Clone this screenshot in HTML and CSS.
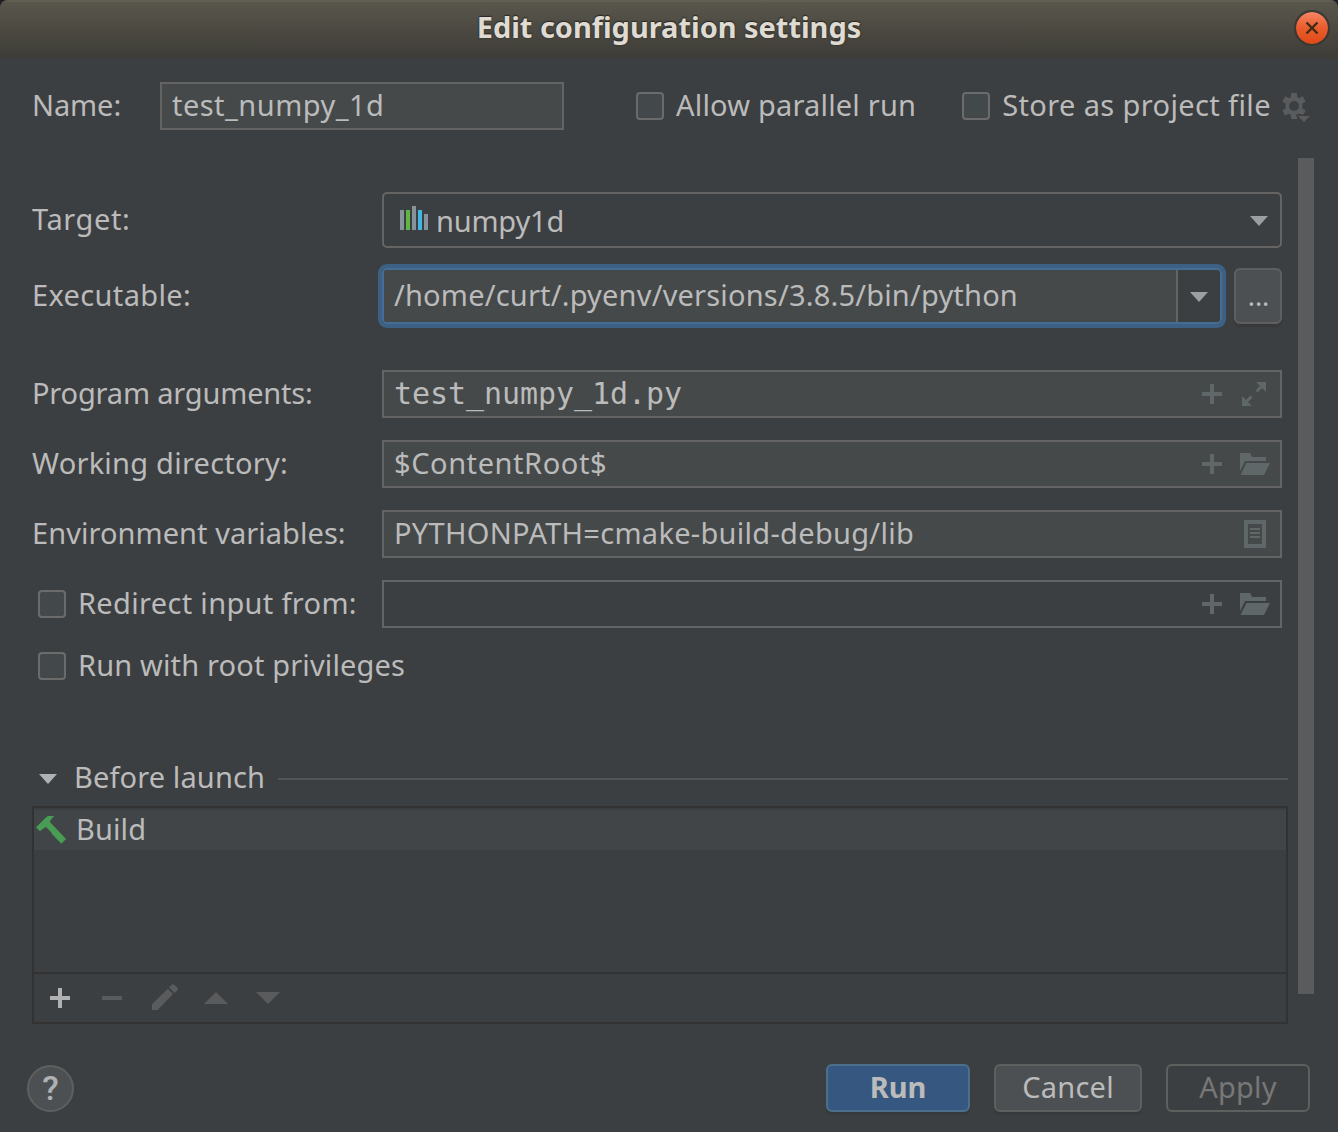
FILE: index.html
```html
<!DOCTYPE html>
<html lang="en">
<head>
<meta charset="utf-8">
<title>Edit configuration settings</title>
<link rel="stylesheet" href="styles.css">
</head>
<body>
<svg class="defs" width="0" height="0">
  <symbol id="plus" viewBox="0 0 20 20"><path d="M8 0h4v8h8v4h-8v8H8v-8H0V8h8z"/></symbol>
  <symbol id="folder" viewBox="0 0 30 22"><path d="M0 0h10l2 4h14v4H5L0 18z"/><path d="M6.500 10H30l-6 12H0.500z"/></symbol>
  <symbol id="arrow" viewBox="0 0 18 10"><path d="M0 0h18L9 10z"/></symbol>
</svg>
<div class="dialog">
  <header class="titlebar">
    <h1 class="title">Edit configuration settings</h1>
    <button class="close" aria-label="Close"><svg width="14" height="14" viewBox="0 0 14 14"><path d="M1.500 1.500l11 11M12.500 1.500l-11 11"/></svg></button>
  </header>

  <div class="head">
    <span class="label ls-m10 head-label">Name:</span>
    <div class="field name-field"><span class="value ls-46">test_numpy_1d</span></div>
    <label class="check parallel"><i class="box"></i><span class="ls-19">Allow parallel run</span></label>
    <label class="check"><i class="box"></i><span class="ls-38">Store as project file</span></label>
    <svg class="gear" width="30" height="32" viewBox="0 0 30 32">
      <path fill-rule="evenodd" d="M10 1h6v4l2.300 1.300 3.400-2 3 5.100-3.300 2.200v4.800l3.300 2.200-3 5.100-3.400-2L16 23v4h-6v-4l-2.300-1.300-3.400 2-3-5.100 3.300-2.200v-4.800L1.300 9.400l3-5.100 3.400 2L10 5zM13 9a5 5 0 1 0 0 10a5 5 0 1 0 0-10z"/>
      <path class="cut" d="M14.500 22.500H30V32H20z"/>
      <path d="M17 24h12l-6 6z"/>
    </svg>
  </div>

  <div class="body">
    <main class="content">
      <section class="form">
        <span class="label ls-60 inset">Target:</span>
        <div class="combo target">
          <svg width="28" height="24" viewBox="0 0 28 24"><path fill="#87939a" d="M0 4h4v20H0zM12 0h4v24h-4zM24 8h4v16h-4z"/><path fill="#62b543" d="M6 4h4v20H6z"/><path fill="#40b6e0" d="M18 4h4v20h-4z"/></svg>
          <span class="ls-m20 target-name">numpy1d</span>
          <svg class="arrow" width="18" height="10"><use href="#arrow"/></svg>
        </div>

        <span class="label ls-35">Executable:</span>
        <div class="exec">
          <div class="combo focused">
            <div class="editor"><span class="ls-19">/home/curt/.pyenv/versions/3.8.5/bin/python</span></div>
            <div class="drop"><svg class="arrow" width="18" height="10"><use href="#arrow"/></svg></div>
          </div>
          <button class="btn browse">...</button>
        </div>

        <span class="label ls-m18 args-row">Program arguments:</span>
        <div class="field args-row">
          <span class="value mono">test_numpy_1d.py</span>
          <svg class="icon" width="20" height="20"><use href="#plus"/></svg>
          <svg class="icon last expand" width="24" height="24" viewBox="0 0 24 24"><path d="M14 0h10v10z"/><path d="M0 14v10h10z"/><path class="line" d="M14.500 9.500l5-5M9.500 14.500l-5 5"/></svg>
        </div>

        <span class="label ls-24 inset">Working directory:</span>
        <div class="field">
          <span class="value ls-56">$ContentRoot$</span>
          <svg class="icon" width="20" height="20"><use href="#plus"/></svg>
          <svg class="icon last" width="30" height="22"><use href="#folder"/></svg>
        </div>

        <span class="label ls-05">Environment variables:</span>
        <div class="field">
          <span class="value ls-29 env">PYTHONPATH=cmake-build-debug/lib</span>
          <svg class="icon last doc" width="22" height="28" viewBox="0 0 22 28"><path fill-rule="evenodd" d="M0 0h22v28H0zM4 4v20h14V4z"/><path d="M6 8h10v2H6zM6 12h10v2H6zM6 16h10v2H6z"/></svg>
        </div>

        <label class="check"><i class="box"></i><span class="ls-33">Redirect input from:</span></label>
        <div class="field disabled">
          <span class="value"></span>
          <svg class="icon" width="20" height="20"><use href="#plus"/></svg>
          <svg class="icon last" width="30" height="22"><use href="#folder"/></svg>
        </div>
      </section>

      <label class="check root"><i class="box"></i><span class="ls-15">Run with root privileges</span></label>

      <section class="launch">
        <div class="launch-head">
          <svg class="arrow" width="18" height="10"><use href="#arrow"/></svg>
          <span class="ls-12">Before launch</span>
          <i class="rule"></i>
        </div>
        <div class="tasks">
          <div class="task">
            <svg width="30" height="28" viewBox="0 0 30 28"><path d="M0 11.300L10.700.7 12 0h6.300L16 2.500l-2.300 3.300L30 23l-4.700 4.700L16 18l-1-2-5-5-1.200.500-4.900 3.700z"/></svg>
            <span class="ls-12">Build</span>
          </div>
          <div class="tools">
            <svg class="add" width="20" height="20"><use href="#plus"/></svg>
            <svg width="20" height="4"><path d="M0 0h20v4H0z"/></svg>
            <svg class="pencil" width="26" height="26" viewBox="0 0 26 26"><path d="M0 20.200L15.700 4.700l5.300 5.300L5.700 26H0zM17 3.400L19.500.900q1.500-1.500 3 0L25.200 3.600q1.500 1.500 0 3L22.500 9z"/></svg>
            <svg width="24" height="12"><path d="M0 12h24L12 0z"/></svg>
            <svg width="24" height="12"><path d="M0 0h24L12 12z"/></svg>
          </div>
        </div>
      </section>
    </main>
    <div class="scrollbar"></div>
  </div>

  <footer class="footer">
    <button class="help">?</button>
    <button class="btn primary">Run</button>
    <button class="btn cancel ls-24">Cancel</button>
    <button class="btn apply ls-24">Apply</button>
  </footer>
</div>
</body>
</html>
```
FILE: styles.css
```css
* { box-sizing: border-box; }
body {
  margin: 0;
  background: #241f26;
  color: #bbb;
  font: 29px/40px "Noto Sans", sans-serif;
  white-space: nowrap;
}
svg { display: block; flex: none; fill: currentColor; }
.defs { position: absolute; }
button { font: inherit; padding: 0; color: inherit; }

.dialog {
  width: 1338px;
  height: 1132px;
  display: flex;
  flex-direction: column;
  background: #3c3f41;
  border-radius: 8px 8px 0 0;
  overflow: hidden;
}

/* title bar */
.titlebar {
  height: 58px;
  flex: none;
  display: grid;
  grid-template-columns: 50px 1fr 50px;
  align-items: center;
  padding-bottom: 4px;
  background: linear-gradient(#59564c, #3e3c37);
  border-top: 2px solid #635f54;
}
.title {
  grid-column: 2;
  margin: 0 0 3px;
  font: bold 29px/40px "Noto Sans", sans-serif;
  letter-spacing: -0.03px;
  text-align: center;
  color: #dfdbd2;
  text-shadow: 0 0 2px #2a2925, 0 -1px 1px #2a2925;
}
.close {
  width: 36px;
  height: 36px;
  margin-left: 6px;
  display: grid;
  place-items: center;
  border: 2px solid #3a3934;
  border-radius: 50%;
  background: linear-gradient(#f58563, #e95c2d 50%, #df4a16) padding-box;
}
.close svg { fill: none; stroke: #3b2d15; stroke-width: 2.4; }

/* name row */
.head { display: flex; align-items: center; height: 48px; margin: 24px 0 28px 32px; flex: none; }
.head-label { width: 128px; }
.name-field { width: 404px; }
.label { align-self: center; margin-top: -2px; }
.check { display: flex; align-items: center; gap: 12px; }
.check span { margin-top: -2px; }
.box { width: 28px; height: 28px; border: 2px solid #6b6b6b; border-radius: 4px; background: #43494a; }
.head .check { margin-left: 72px; }
.head .parallel + .check { margin-left: 46px; }
.gear { margin: 0 0 -4px 10px; color: #5a5b5c; }
.gear .cut { fill: #3c3f41; }

/* form */
.body { display: flex; height: 866px; flex: none; }
.content { width: 1256px; margin-left: 32px; padding-top: 34px; }
.form { display: grid; grid-template-columns: 350px 900px; row-gap: 22px; }
.field {
  display: flex;
  align-items: center;
  height: 48px;
  padding-left: 10px;
  border: 2px solid #646464;
  background: #45494a;
}
.disabled { background: none; }
.value { flex: 1; margin-top: -2px; }
.mono { font: 30px/40px "DejaVu Sans Mono", monospace; letter-spacing: -0.06px; margin: 0; }
.icon { color: #5f6769; margin-right: 18px; }
.icon.last { margin-right: 10px; }
.icon.expand { margin: 0 14px 0 2px; }
.icon.doc { margin-right: 14px; }
.icon .line { fill: none; stroke: currentColor; stroke-width: 3; }
.arrow { color: #9c9fa1; }
.combo { display: flex; align-items: center; height: 56px; border: 2px solid #646464; border-radius: 5px; }
.target { padding: 1px 12px 0 16px; margin-bottom: -2px; }
.target svg:first-child { margin-bottom: 5px; }
.target .arrow { margin-top: 1px; }
.target-name { flex: 1; margin: 1px 0 0 8px; }
.form > .label:first-child { margin-top: -1px; }
.exec { display: flex; gap: 12px; }
.focused { width: 840px; border-color: #466d94; box-shadow: 0 0 0 4px #3d6185; }
.editor {
  flex: 1;
  height: 52px;
  padding: 5px 0 0 10px;
  background: #45494a;
  border-right: 2px solid #646464;
  border-radius: 3px 0 0 3px;
}
.drop { width: 42px; padding-top: 1px; display: grid; place-items: center; }
.args-row { margin-top: 24px; }
.label.args-row { margin-top: 22px; }
.form .check { margin-left: 6px; }
.root { margin: 24px 0 0 6px; height: 28px; }

/* buttons */
.btn {
  height: 48px;
  padding-bottom: 3px;
  border: 2px solid #5e6060;
  border-radius: 6px;
  background: #4c5052;
  box-shadow: 0 3px 1px #37393b;
}
.browse { width: 48px; height: 56px; padding: 0 0 0 1px; font-size: 27px; }

/* before launch */
.launch { margin: 78px 0 0; }
.launch-head { display: flex; align-items: center; height: 40px; padding-left: 7px; }
.launch-head .arrow { color: #afb1b3; margin-top: 1px; }
.launch-head span { margin: -2px 13px 0 17px; }
.rule { flex: 1; height: 2px; background: #515355; margin-top: 2px; }
.tasks { height: 218px; margin-top: 8px; border: 2px solid #323232; display: flex; flex-direction: column; }
.task { display: flex; align-items: center; height: 40px; margin-top: 2px; padding-left: 2px; background: #414547; }
.task svg { color: #499c54; }
.task span { margin: -3px 0 0 10px; }
.tools {
  display: flex;
  align-items: center;
  gap: 29px;
  height: 50px;
  margin-top: auto;
  padding-left: 16px;
  border-top: 2px solid #323232;
  color: #5a5b5c;
}
.tools svg + svg { margin-left: 3px; }
.tools .pencil { margin: 0 -3px 2px 1px; }
.tools .pencil + svg { margin-left: 0; }
.tools svg:last-child { margin-left: -1px; }
.tools .add { color: #afb1b3; }
.scrollbar { width: 16px; height: 836px; margin-left: 10px; background: #595b5d; }

/* footer */
.footer { display: flex; align-items: flex-start; margin: 40px 28px 0 27px; }
.help {
  width: 47px;
  height: 47px;
  margin: 1px auto 0 0;
  border: 2px solid #5e6060;
  border-radius: 50%;
  background: #4c5052;
  color: #afb1b3;
  font: 500 34px/43px Roboto, sans-serif;
}
.primary { width: 144px; background: #365880; border-color: #4c708c; font-weight: bold; }
.cancel { width: 148px; margin: 0 24px; }
.apply { width: 144px; background: none; box-shadow: none; color: #777; }

/* tracking */
.ls-m20 { letter-spacing: -0.2px; }
.ls-m18 { letter-spacing: -0.18px; }
.ls-m10 { letter-spacing: -0.1px; }
.ls-05 { letter-spacing: 0.05px; }
.ls-12 { letter-spacing: 0.12px; }
.ls-15 { letter-spacing: 0.15px; }
.ls-19 { letter-spacing: 0.19px; }
.ls-24 { letter-spacing: 0.24px; }
.ls-29 { letter-spacing: 0.29px; }
.ls-33 { letter-spacing: 0.33px; }
.ls-35 { letter-spacing: 0.35px; }
.ls-38 { letter-spacing: 0.38px; }
.ls-46 { letter-spacing: 0.46px; }
.ls-56 { letter-spacing: 0.56px; }
.ls-60 { letter-spacing: 0.6px; }
```
